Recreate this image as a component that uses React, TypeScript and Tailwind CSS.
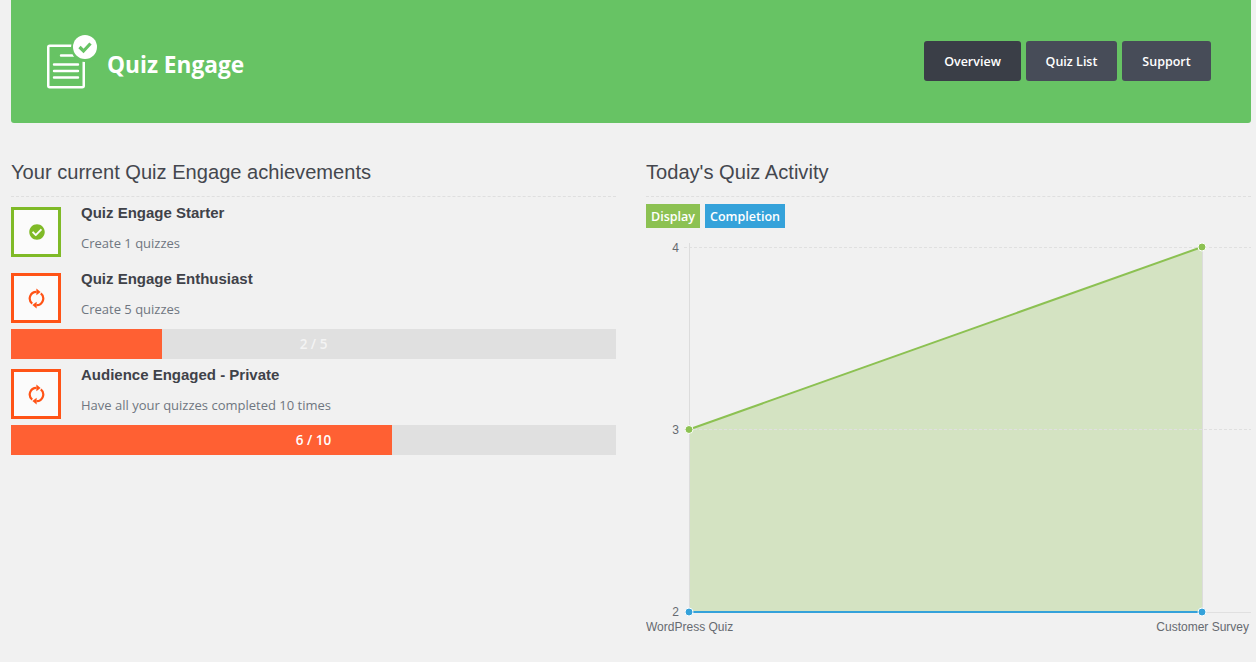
import { FaCheckCircle } from "react-icons/fa";

const sans = "font-['Open_Sans',sans-serif]";
const helvetica = "font-['Liberation_Sans',Arial,sans-serif]";

function RefreshIcon() {
  return (
    <svg width="17" height="21" viewBox="0 0 17 21" fill="none" className="ml-px">
      <path d="M8.5 3.9A6.6 6.6 0 0 0 4.2 15.6" stroke="#ff5316" strokeWidth="2.2" />
      <path d="M8.5 17.1A6.6 6.6 0 0 0 12.8 5.4" stroke="#ff5316" strokeWidth="2.2" />
      <path d="M8.4 0.6L12.6 3.9L8.4 7.2Z" fill="#ff5316" />
      <path d="M8.6 13.8L4.4 17.1L8.6 20.4Z" fill="#ff5316" />
    </svg>
  );
}

function Achievement({
  title,
  text,
  done,
}: {
  title: string;
  text: string;
  done?: boolean;
}) {
  return (
    <div className="flex h-[50px] items-start">
      <div
        className={`flex size-[50px] shrink-0 items-center justify-center border-[3px] bg-[#fbfbfb] ${
          done ? "border-[#7fba27]" : "border-[#ff5316]"
        }`}
      >
        {done ? <FaCheckCircle className="ml-px text-[#7fba27]" size={16} /> : <RefreshIcon />}
      </div>
      <div className="ml-5">
        <h4 className={`${helvetica} mt-[-4px] text-[15px] leading-[20px] font-bold text-[#3f4249]`}>{title}</h4>
        <p className={`${sans} mt-[10px] text-[13px] leading-[20px] text-[#6f7680]`}>{text}</p>
      </div>
    </div>
  );
}

function Progress({ label, width, faded }: { label: string; width: string; faded?: boolean }) {
  return (
    <div className="relative mt-[6px] h-[30px] bg-[#e0e0e0]">
      <div className={`h-full bg-[#ff6033] ${width}`} />
      <span
        className={`${sans} absolute inset-0 flex items-center justify-center text-[13.5px] font-semibold ${
          faded ? "text-[#f4f4f4]" : "text-white"
        }`}
      >
        {label}
      </span>
    </div>
  );
}

function Chart() {
  const labels = "#666a70";
  return (
    <svg width="605" height="410" viewBox="646 236 605 410" className={`${helvetica} block`}>
      <path d="M689 429L1202 247V612H689Z" fill="#d4e3c2" />
      <g stroke="#e0e0e0" strokeWidth="1" strokeDasharray="3 2">
        <line x1="684" y1="247.5" x2="1251" y2="247.5" />
        <line x1="684" y1="429.5" x2="1251" y2="429.5" />
      </g>
      <line x1="684" y1="612.5" x2="1251" y2="612.5" stroke="#e0e0e0" />
      <line x1="689.5" y1="243" x2="689.5" y2="612" stroke="#dcdcdc" />
      <line x1="1202.5" y1="247" x2="1202.5" y2="612" stroke="#dcdcdc" />
      <line x1="689" y1="429.5" x2="1202" y2="247" stroke="#8cc152" strokeWidth="2" />
      <line x1="689" y1="612" x2="1202" y2="612" stroke="#35a2da" strokeWidth="2" />
      <circle cx="689" cy="429.5" r="4" fill="#8cc152" stroke="#fff" />
      <circle cx="1202" cy="247" r="4" fill="#8cc152" stroke="#fff" />
      <circle cx="689" cy="612" r="4" fill="#35a2da" stroke="#fff" />
      <circle cx="1202" cy="612" r="4" fill="#35a2da" stroke="#fff" />
      <g fontSize="12" fill={labels}>
        <text x="679" y="252" textAnchor="end">4</text>
        <text x="679" y="434" textAnchor="end">3</text>
        <text x="679" y="616" textAnchor="end">2</text>
        <text x="646" y="631">WordPress Quiz</text>
        <text x="1249" y="631" textAnchor="end">Customer Survey</text>
      </g>
    </svg>
  );
}

export default function App() {
  return (
    <div className="h-[662px] w-[1256px] overflow-hidden bg-[#f1f1f1] pr-[5px] pl-[11px]">
      <header className="flex h-[123px] items-center justify-between rounded-b-[3px] bg-[#67c364] pr-10 pl-9">
        <div className="flex items-center">
          <svg width="52" height="54" viewBox="0 0 52 54" fill="none">
            <rect x="1.25" y="10.75" width="35.5" height="41.5" rx="1.5" stroke="#fff" strokeWidth="2.5" />
            <path d="M14 20.5H29M7 29.5H31M7 36H31M7 42.5H31" stroke="#fff" strokeWidth="2.4" strokeLinecap="round" />
            <circle cx="38" cy="13" r="14" fill="#67c364" />
            <circle cx="38" cy="12" r="12" fill="#fff" />
            <path d="M32.5 12L36.5 16L43.5 8.5" stroke="#67c364" strokeWidth="3.2" />
          </svg>
          <span className={`${sans} mt-[8px] ml-[8px] text-[22.7px] font-bold text-white`}>Quiz Engage</span>
        </div>
        <nav className={`${sans} mt-[-2px] flex gap-[5px] text-[12.5px] font-semibold text-white`}>
          <a className="flex h-10 w-[97px] items-center justify-center rounded-[3px] bg-[#3a3e47] pt-[3px]">Overview</a>
          <a className="flex h-10 w-[91px] items-center justify-center rounded-[3px] bg-[#474c58] pt-[3px]">Quiz List</a>
          <a className="flex h-10 w-[89px] items-center justify-center rounded-[3px] bg-[#474c58] pt-[3px]">Support</a>
        </nav>
      </header>
      <main className="mt-[35px] grid grid-cols-[605px_605px] gap-x-[30px]">
        <section>
          <h2 className={`${helvetica} border-b border-dashed border-[#dfdfdf] pb-[10px] text-[20.1px] leading-[28px] font-light text-[#44474e]`}>
            Your current Quiz Engage achievements
          </h2>
          <div className="mt-[10px]">
            <Achievement done title="Quiz Engage Starter" text="Create 1 quizzes" />
            <div className="mt-4">
              <Achievement title="Quiz Engage Enthusiast" text="Create 5 quizzes" />
            </div>
            <Progress label="2 / 5" width="w-[25%]" faded />
            <div className="mt-[10px]">
              <Achievement title="Audience Engaged - Private" text="Have all your quizzes completed 10 times" />
            </div>
            <Progress label="6 / 10" width="w-[63%]" />
          </div>
        </section>
        <section>
          <h2 className={`${helvetica} border-b border-dashed border-[#dfdfdf] pb-[10px] text-[20.1px] leading-[28px] font-light text-[#44474e]`}>
            Today's Quiz Activity
          </h2>
          <div className={`${sans} mt-[7px] flex gap-[5px] text-[12.5px] font-semibold text-white`}>
            <span className="flex h-6 w-[54px] items-center justify-center bg-[#8cc152] pt-[2px]">Display</span>
            <span className="flex h-6 w-20 items-center justify-center bg-[#35a2da] pt-[2px]">Completion</span>
          </div>
          <div className="mt-2">
            <Chart />
          </div>
        </section>
      </main>
    </div>
  );
}
